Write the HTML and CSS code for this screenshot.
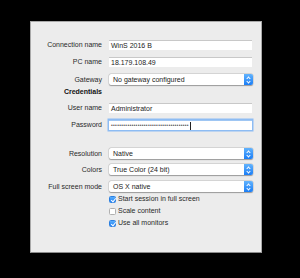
FILE: index.html
```html
<!DOCTYPE html>
<html lang="en">
<head>
  <meta charset="UTF-8" />
  <title>Connection settings</title>
  <link rel="stylesheet" href="styles.css">
</head>
<body>

<!-- Connection sheet -->
<div class="sheet">
  <div class="row r1">
    <span class="label">Connection name</span>
    <div class="field">WinS 2016 B</div>
  </div>
  <div class="row r2">
    <span class="label">PC name</span>
    <div class="field">18.179.108.49</div>
  </div>
  <div class="row r3">
    <span class="label">Gateway</span>
    <div class="popup">No gateway configured<span class="arrows"></span></div>
  </div>
  <div class="row r4">
    <span class="label bold">Credentials</span>
  </div>
  <div class="row r5">
    <span class="label">User name</span>
    <div class="field">Administrator</div>
  </div>
  <div class="row r6">
    <span class="label">Password</span>
    <div class="field focus"><span class="dots">••••••••••••••••••••••••••••••••••••••</span><span class="caret"></span></div>
  </div>

  <div class="row r7">
    <span class="label">Resolution</span>
    <div class="popup">Native<span class="arrows"></span></div>
  </div>
  <div class="row r8">
    <span class="label">Colors</span>
    <div class="popup">True Color (24 bit)<span class="arrows"></span></div>
  </div>
  <div class="row r9">
    <span class="label">Full screen mode</span>
    <div class="popup">OS X native<span class="arrows"></span></div>
  </div>
  <div class="row check r10">
    <span></span>
    <label><span class="box on"></span>Start session in full screen</label>
  </div>
  <div class="row check r11">
    <span></span>
    <label><span class="box"></span>Scale content</label>
  </div>
  <div class="row check r12">
    <span></span>
    <label><span class="box on"></span>Use all monitors</label>
  </div>
</div>

</body>
</html>
```

FILE: styles.css
```css
* { box-sizing: border-box; }
body {
  margin: 0;
  width: 300px;
  height: 278px;
  background: #000;
  font-family: 'Liberation Sans', Arial, sans-serif;
  font-size: 7px;
  color: #2a2a2a;
  overflow: hidden;
  padding-top: 21px;
}

.sheet {
  margin-left: 30px;
  width: 232px;
  height: 232px;
  background: #ececec;
  border: 1px solid #a9a9a9;
  border-bottom-color: #8c8c8c;
  padding: 18px 11px 0 1px;
  display: flex;
  flex-direction: column;
}

.row {
  display: grid;
  grid-template-columns: 70px 143px;
  column-gap: 7px;
  align-items: center;
  height: 10px;
}

.r2, .r3, .r5, .r6 { margin-top: 7px; }
.r3, .r7, .r8, .r9 { height: 11px; }
.r4 { margin-top: 3px; height: 8px; }
.r7 { margin-top: 18px; }
.r8 { margin-top: 5px; }
.r9 { margin-top: 6px; }
.check { height: 7px; margin-top: 5px; }
.r10 { margin-top: 3px; }

.label {
  text-align: right;
  white-space: nowrap;
  line-height: 8px;
}

.bold {
  font-weight: bold;
  color: #111;
}

.field {
  height: 10px;
  background: #fff;
  border-top: 1px solid #c8c8c8;
  padding-left: 2px;
  line-height: 9px;
  white-space: nowrap;
  color: #222;
  display: flex;
  align-items: center;
}

.field.focus {
  box-shadow: 0 0 0 1.5px #8dbcf3;
  border-top-color: #9fc6f3;
}

.dots {
  font-size: 5px;
  letter-spacing: 0.3px;
  color: #555;
  line-height: 9px;
}

.caret {
  width: 1px;
  height: 8px;
  background: #222;
  margin-left: 1px;
}

.popup {
  position: relative;
  height: 11px;
  width: 144px;
  background: #fff;
  border-radius: 2px;
  box-shadow: 0 0.5px 1px #9b9b9b, 0 0 0 0.5px #c9c9c9;
  padding-left: 4px;
  line-height: 11px;
  white-space: nowrap;
  color: #222;
}

.arrows {
  position: absolute;
  right: 0;
  top: 0;
  width: 9px;
  height: 11px;
  border-radius: 0 2px 2px 0;
  background: linear-gradient(#62b3fd, #1b7ef6);
}

.arrows::before, .arrows::after {
  content: "";
  position: absolute;
  left: 3px;
  width: 2px;
  height: 2px;
  border: solid #fff;
  border-width: 0.8px 0 0 0.8px;
}

.arrows::before {
  top: 3px;
  transform: rotate(45deg);
}

.arrows::after {
  top: 6px;
  transform: rotate(-135deg);
}

.check label {
  display: flex;
  align-items: center;
  white-space: nowrap;
  line-height: 8px;
}

.box {
  width: 7px;
  height: 7px;
  border-radius: 1.5px;
  background: #fff;
  border: 0.5px solid #b0b0b0;
  margin-right: 2px;
  flex: none;
  position: relative;
}

.box.on {
  background: linear-gradient(#5aaefc, #1f80f5);
  border-color: #2a7fe0;
}

.box.on::after {
  content: "";
  position: absolute;
  left: 2px;
  top: 0.5px;
  width: 2px;
  height: 4px;
  border: solid #fff;
  border-width: 0 1px 1px 0;
  transform: rotate(40deg);
}
```
